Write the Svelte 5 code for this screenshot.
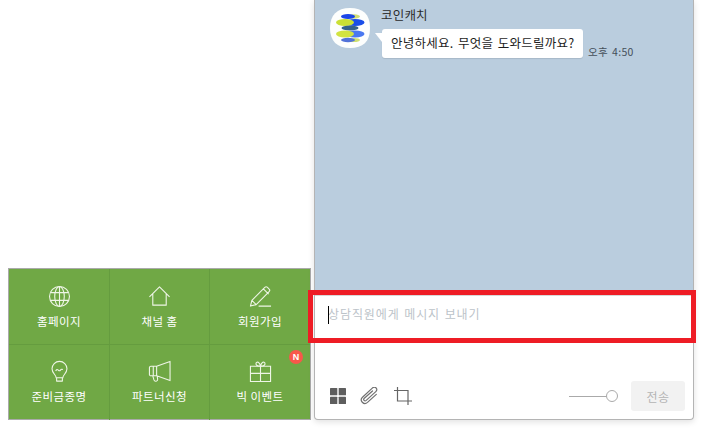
<script>
  const menu = [
    { label: '홈페이지', icon: 'globe' },
    { label: '채널 홈', icon: 'home' },
    { label: '회원가입', icon: 'pen' },
    { label: '준비금종명', icon: 'bulb' },
    { label: '파트너신청', icon: 'horn' },
    { label: '빅 이벤트', icon: 'gift', badge: 'N' }
  ];
</script>

<div class="page">
  <aside class="side">
    <nav class="grid">
      {#each menu as item}
        <div class="cell">
          <svg class="mi" viewBox="0 0 24 24" width="23" height="23" fill="none" stroke="currentColor" stroke-width="1.150">
            {#if item.icon === 'globe'}
              <circle cx="12" cy="12" r="10.400" />
              <ellipse cx="12" cy="12" rx="5" ry="10.400" />
              <path d="M12 1.600v20.800M2.800 8h18.400M2.800 16h18.400" />
            {:else if item.icon === 'home'}
              <path d="M1.500 12.500 12 2l10.500 10.500M5 9.500V21h14V9.500" stroke-linejoin="round" />
            {:else if item.icon === 'pen'}
              <path d="M1.500 22l1.500-6L16.500 2.500a2 2 0 0 1 2.800 0l1.700 1.700a2 2 0 0 1 0 2.800L7.500 20.500 1.500 22zM3 16l4.500 4.500M15 4l5.500 5.500M10 22h13" stroke-linejoin="round" />
            {:else if item.icon === 'bulb'}
              <path d="M8.500 18.500c0-3-4.300-4.700-4.300-9.300a7.800 7.800 0 0 1 15.600 0c0 4.600-4.300 6.300-4.300 9.300zM9 18.500V22h6v-3.500" stroke-linejoin="round" />
              <path d="M8 11.500c1-2 1.800-2 2.700-1s1.600 1 2.300 0 1.500-1 2.600-.6" />
            {:else if item.icon === 'horn'}
              <path d="M23 1.500v20L9 16.500H3a1.500 1.500 0 0 1-1.500-1.500V8A1.500 1.500 0 0 1 3 6.500h6zM9 6.500v10M5.500 6.500v10M5 16.500l1.200 4.300a2 2 0 0 0 3.900-.8l-.6-3.500" stroke-linejoin="round" />
            {:else}
              <path d="M1.500 6.500h21v16h-21zM1.500 14h21M12 6.500v16" />
              <path d="M12 6.500C8 6.500 6.800 4.800 7.400 3.200 8.200 1.300 11 2 12 6.500c1-4.500 3.800-5.200 4.600-3.300.6 1.600-.6 3.300-4.600 3.300z" />
            {/if}
          </svg>
          <span class="label">{item.label}</span>
          {#if item.badge}<span class="badge">{item.badge}</span>{/if}
        </div>
      {/each}
    </nav>
  </aside>

  <section class="panel">
    <div class="messages">
      <svg class="avatar" viewBox="0 0 40 40" width="40" height="40">
        <path d="M20 0C33 0 40 6 40 20S33 40 20 40 0 33 0 20 7 0 20 0z" fill="#fdfefd" />
        <ellipse cx="24" cy="8.500" rx="6" ry="2.200" fill="#d2de74" />
        <ellipse cx="18" cy="8.500" rx="7" ry="2.400" fill="#1c46e6" />
        <ellipse cx="25" cy="14.500" rx="9.500" ry="3.400" fill="#1a4ee8" />
        <ellipse cx="15" cy="14.500" rx="9" ry="3.400" fill="#cbe034" />
        <ellipse cx="20" cy="20" rx="8.500" ry="2.400" fill="#34628c" />
        <ellipse cx="25" cy="26" rx="9.500" ry="3.400" fill="#4a78f0" />
        <ellipse cx="15" cy="26" rx="9" ry="3.400" fill="#d2e340" />
        <ellipse cx="24" cy="32" rx="6" ry="2" fill="#cfe070" />
        <ellipse cx="18" cy="32" rx="7" ry="2.200" fill="#5272d8" />
      </svg>
      <div class="body">
        <div class="name">코인캐치</div>
        <div class="row">
          <div class="bubble">안녕하세요. 무엇을 도와드릴까요?</div>
          <span class="time">오후 4:50</span>
        </div>
      </div>
    </div>

    <div class="composer">
      <div class="input"><i class="caret"></i><span class="placeholder">상담직원에게 메시지 보내기</span></div>
      <div class="tools">
        <svg class="tool" viewBox="0 0 16 16" width="16" height="16" fill="#5e5e5e">
          <rect x="0" y="0" width="7.300" height="7.300" rx=".6" />
          <rect x="8.700" y="0" width="7.300" height="7.300" rx=".6" />
          <rect x="0" y="8.700" width="7.300" height="7.300" rx=".6" />
          <rect x="8.700" y="8.700" width="7.300" height="7.300" rx=".6" />
        </svg>
        <svg class="tool" viewBox="0 0 20 18" width="20" height="18" fill="none" stroke="#707070" stroke-width="1.200">
          <path d="M12.500 4 4.300 11.300c-1.500 1.400.3 3.500 1.900 2.100l9.600-8.800c2.800-2.600-.8-5.900-3.500-3.500L2.500 10.200c-3.400 3.200 1.200 8.500 5 5.200l8.800-8" stroke-linecap="round" />
        </svg>
        <svg class="tool" viewBox="0 0 18 18" width="18" height="18" fill="none" stroke="#666" stroke-width="1.200">
          <path d="M3.500 0v14h14.500M0 3.500h14V18" />
        </svg>
        <div class="slider"><i class="track"></i><i class="knob"></i></div>
        <button class="send" disabled>전송</button>
      </div>
    </div>
  </section>

  <div class="highlight"></div>
</div>

<style>
  :global(body) {
    margin: 0;
    background: #fff;
    font-family: "Noto Sans CJK KR", "Noto Sans", sans-serif;
  }
  .page {
    position: relative;
    display: flex;
    width: 711px;
    height: 434px;
    overflow: hidden;
  }
  .side {
    width: 314px;
    padding: 268px 0 0 8px;
    box-sizing: border-box;
  }
  .grid {
    display: grid;
    grid-template-columns: 101px 100px 100px;
    grid-template-rows: 76px 75px;
    width: 303px;
    height: 152px;
    box-sizing: border-box;
    border: 1px solid #aaa;
    background: #70a845;
  }
  .cell {
    position: relative;
    display: flex;
    flex-direction: column;
    align-items: center;
    color: #eef5e6;
    border-right: 1px solid #659c3f;
    border-bottom: 1px solid #659c3f;
    box-sizing: border-box;
  }
  .cell:nth-child(3n) { border-right: 0; }
  .cell:nth-child(n + 4) { border-bottom: 0; }
  .mi { margin-top: 16px; }
  .cell:nth-child(n + 4) .mi { margin-top: 15px; }
  .label {
    margin-top: 5px;
    font-size: 11.500px;
    line-height: 16px;
    letter-spacing: .4px;
    color: #fff;
    white-space: nowrap;
  }
  .badge {
    position: absolute;
    top: 5px;
    right: 7px;
    width: 14px;
    height: 14px;
    border-radius: 50%;
    background: #f8584a;
    color: #fff;
    font: bold 9px/14px "Liberation Sans", sans-serif;
    text-align: center;
  }
  .panel {
    width: 380px;
    height: 420px;
    display: flex;
    flex-direction: column;
    box-sizing: border-box;
    border: 1px solid #b4b4b4;
    border-top: 0;
    border-radius: 0 0 4px 4px;
    background: #fff;
    box-shadow: 0 2px 6px rgba(0, 0, 0, .12);
  }
  .messages {
    height: 295px;
    flex: none;
    display: flex;
    gap: 11px;
    padding: 8px 0 0 15px;
    box-sizing: border-box;
    background: #bacdde;
  }
  .avatar { flex: none; }
  .name {
    margin-top: -1px;
    font-size: 12.500px;
    line-height: 16px;
    letter-spacing: .2px;
    color: #2b2b2b;
  }
  .row {
    display: flex;
    align-items: flex-end;
    gap: 5px;
    margin: 6px 0 0 1px;
  }
  .bubble {
    position: relative;
    width: 201px;
    height: 29px;
    box-sizing: border-box;
    padding-left: 9px;
    background: #fff;
    border-radius: 3px;
    font-size: 12.500px;
    line-height: 28px;
    letter-spacing: .25px;
    word-spacing: 1.500px;
    color: #1d1d1d;
    white-space: nowrap;
    box-shadow: 0 1px 1px rgba(0, 0, 0, .1);
  }
  .bubble::before {
    content: "";
    position: absolute;
    left: -7px;
    top: 4px;
    border-right: 7px solid #fff;
    border-bottom: 9px solid transparent;
  }
  .time {
    font-size: 10.500px;
    line-height: 12px;
    letter-spacing: .3px;
    word-spacing: 1.500px;
    color: #454f5a;
    white-space: nowrap;
  }
  .composer {
    flex: 1;
    display: flex;
    flex-direction: column;
    border-top: 1px solid #d8d8d8;
  }
  .input {
    flex: 1;
    position: relative;
    padding: 9px 0 0 13px;
    font-size: 12px;
    line-height: 18px;
    letter-spacing: .9px;
    word-spacing: 1px;
  }
  .caret {
    position: absolute;
    left: 13px;
    top: 10px;
    width: 1px;
    height: 18px;
    background: #000;
  }
  .placeholder { color: #bcc3c9; white-space: nowrap; }
  .tools {
    display: flex;
    align-items: center;
    height: 30px;
    margin: 0 8px 8px 15px;
  }
  .tool { flex: none; margin-right: 14px; }
  .slider {
    position: relative;
    width: 49px;
    height: 12px;
    margin: 0 13px 0 auto;
  }
  .track {
    position: absolute;
    left: 0;
    right: 8px;
    top: 6px;
    height: 1px;
    background: #aaa;
  }
  .knob {
    position: absolute;
    right: 0;
    top: 0;
    width: 10px;
    height: 10px;
    border: 1px solid #aaa;
    border-radius: 50%;
    background: #fff;
  }
  .send {
    width: 54px;
    height: 30px;
    border: 0;
    border-radius: 3px;
    background: #f2f2f2;
    color: #b4b4b4;
    font: inherit;
    font-size: 12px;
    letter-spacing: .5px;
    padding: 0;
  }
  .highlight {
    position: absolute;
    left: 308px;
    top: 290px;
    width: 388px;
    height: 53px;
    box-sizing: border-box;
    border: 5px solid #ee1c25;
    pointer-events: none;
  }
</style>
